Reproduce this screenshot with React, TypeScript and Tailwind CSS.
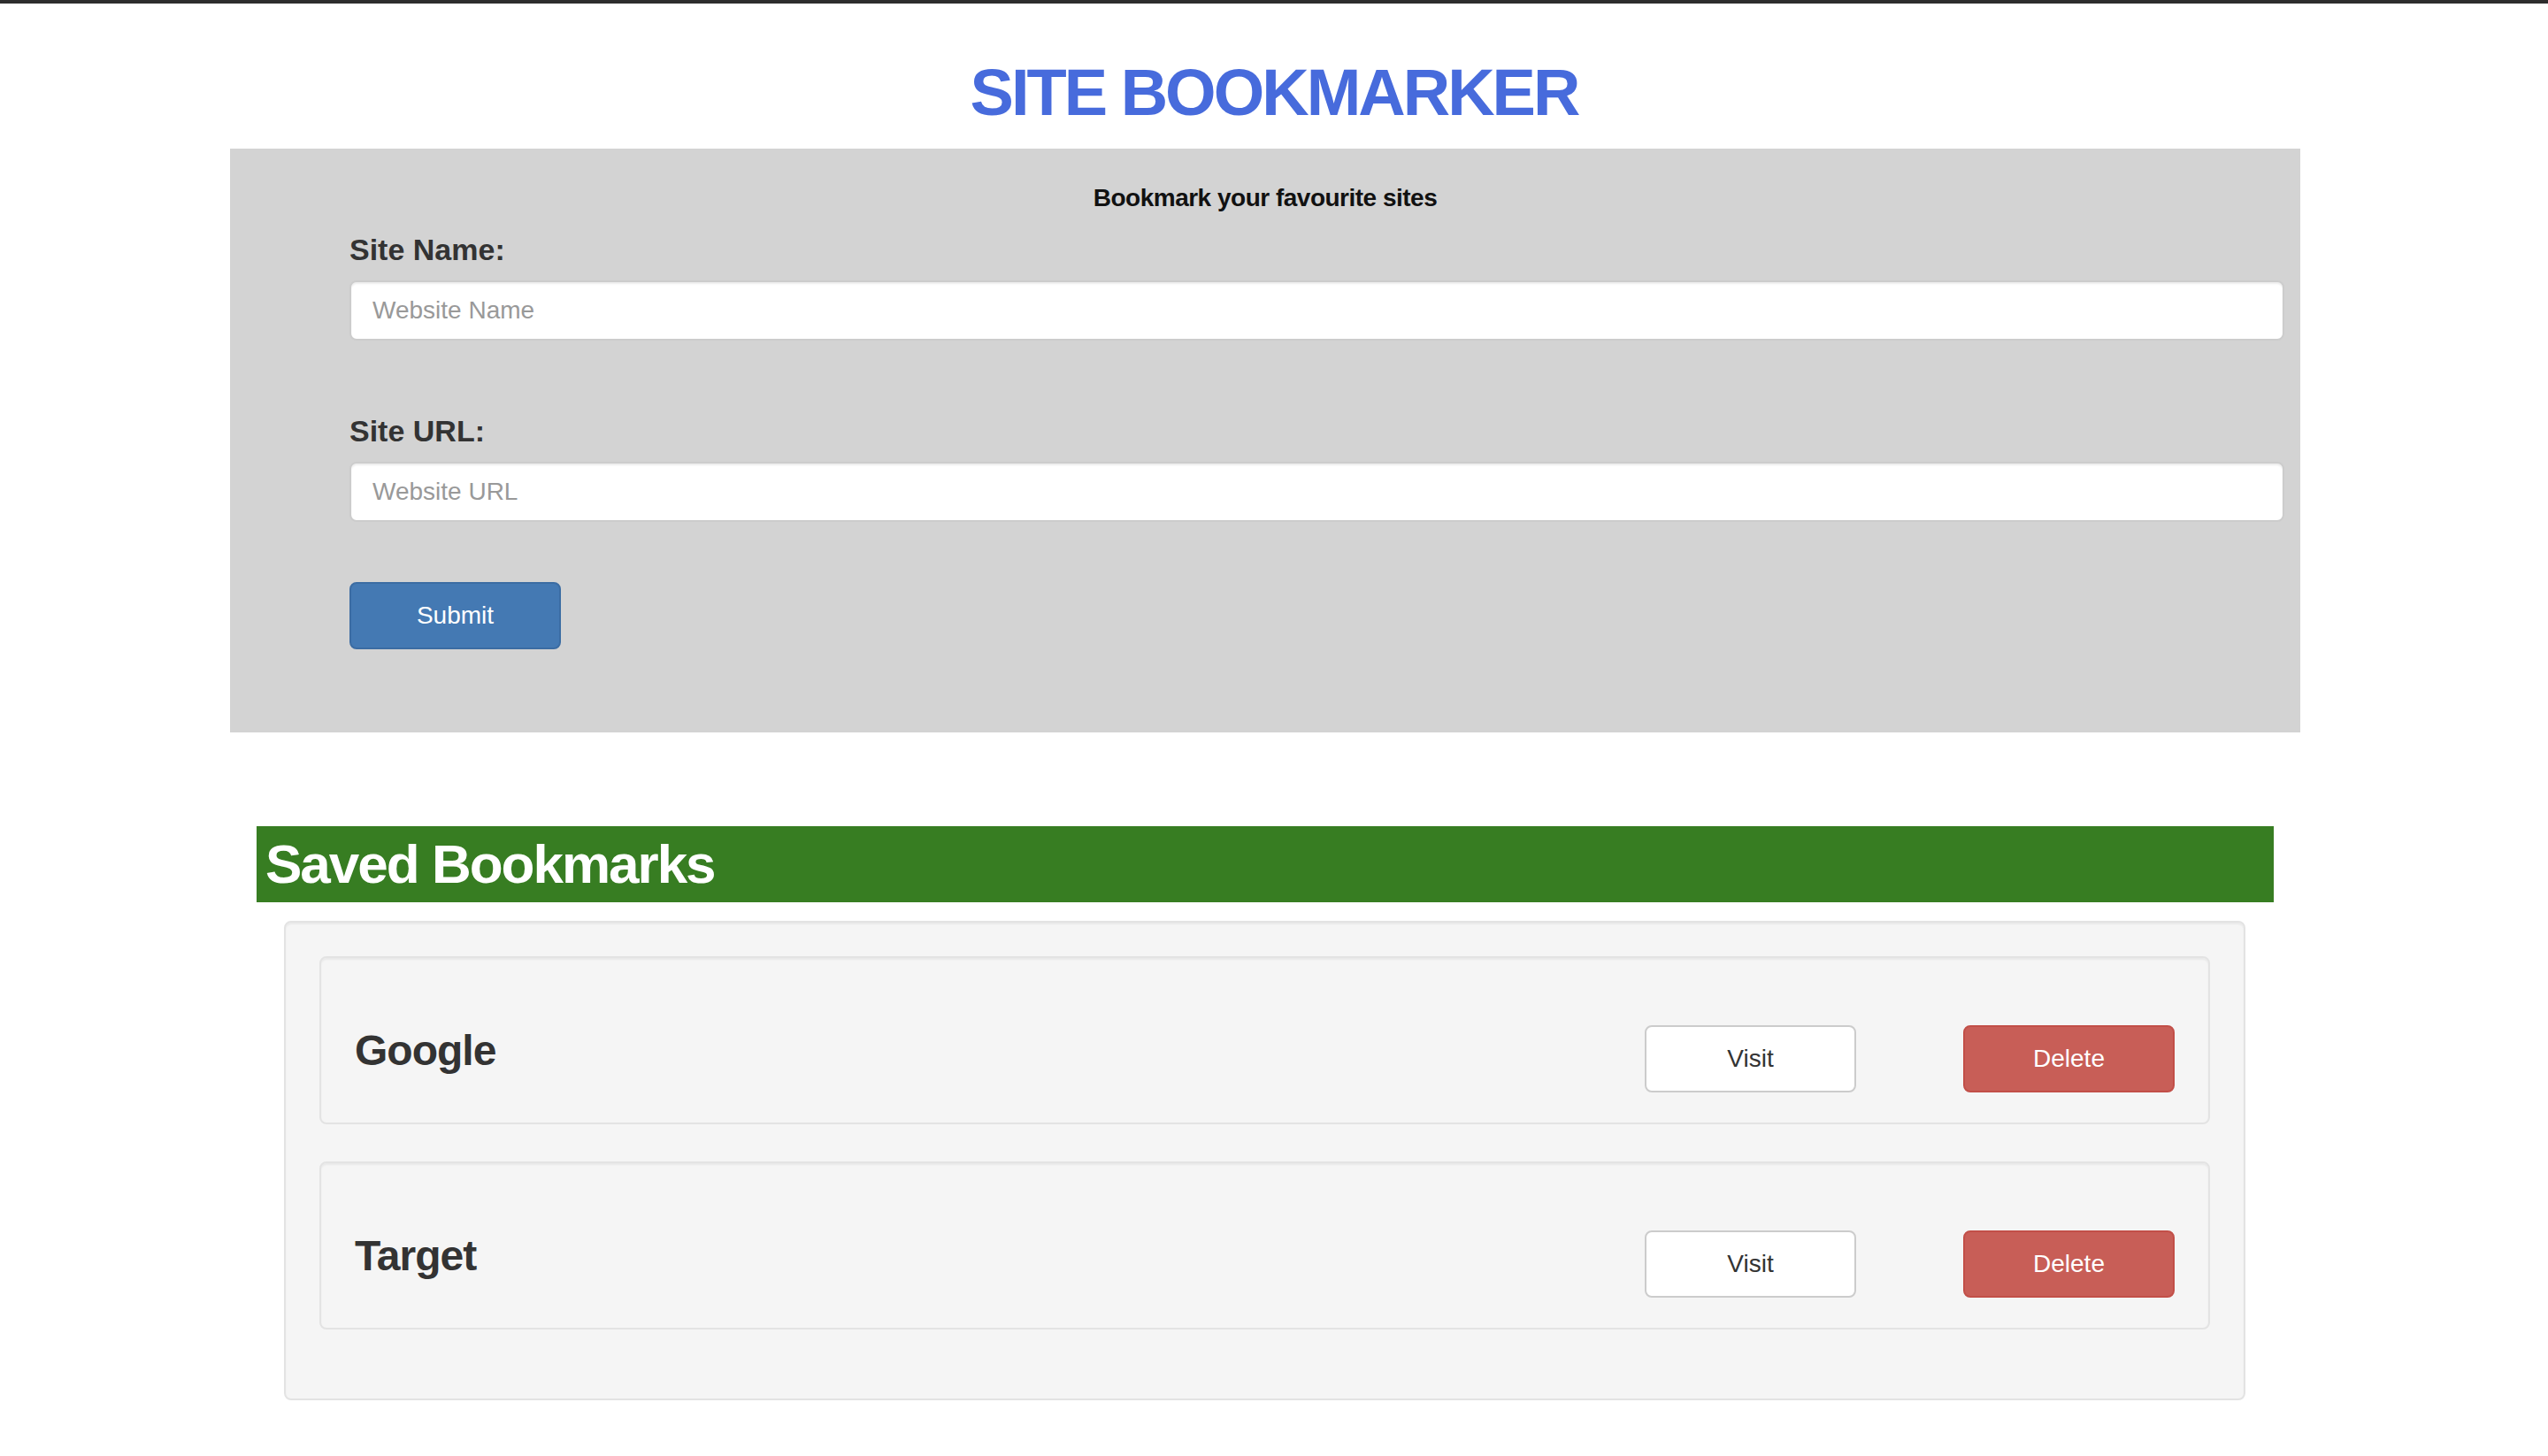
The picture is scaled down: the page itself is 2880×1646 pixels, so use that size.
import React from 'react';

interface Bookmark {
  name: string;
  url: string;
}

const bookmarks: Bookmark[] = [
  { name: 'Google', url: 'https://google.com' },
  { name: 'Target', url: 'https://target.com' },
];

const BookmarkRow = ({ bookmark }: { bookmark: Bookmark }) => (
  <div className="flex h-[190px] items-start justify-between rounded-[8px] border-2 border-[#e3e3e3] bg-[#f5f5f5] px-[38px] shadow-[inset_0_2px_2px_rgba(0,0,0,0.05)]">
    <h3 className="mt-[81px] text-[48px] font-bold leading-[48px] tracking-[-1px] text-[#333]">
      {bookmark.name}
    </h3>
    <div className="mt-[76px] flex gap-[121px]">
      <button className="h-[76px] w-[239px] rounded-[8px] border-2 border-[#cccccc] bg-white text-[28px] text-[#333]">
        Visit
      </button>
      <button className="h-[76px] w-[239px] rounded-[8px] border-2 border-[#c24f48] bg-[#c85e57] text-[28px] text-white">
        Delete
      </button>
    </div>
  </div>
);

export default function App() {
  return (
    <div className="min-h-screen bg-white font-['Liberation_Sans',Arial,sans-serif]">
      <div className="h-[4px] bg-[#2d2d2d]" />

      <h1 className="mt-[64px] text-center text-[74px] font-bold leading-[74px] tracking-[-3px] text-[#476bdc]">
        SITE BOOKMARKER
      </h1>

      <div className="ml-[260px] mt-[26px] h-[660px] w-[2340px] bg-[#d3d3d3] pt-[39px]">
        <p className="text-center text-[28px] font-bold leading-[34px] tracking-[-0.5px] text-[#111]">
          Bookmark your favourite sites
        </p>
        <form className="flex flex-col pl-[135px] pr-[18px]" onSubmit={(e) => e.preventDefault()}>
          <label className="mt-[21px] text-[34px] font-bold leading-[40px] text-[#333]">Site Name:</label>
          <input
            type="text"
            placeholder="Website Name"
            className="mt-[15px] h-[68px] w-full rounded-[8px] border-2 border-[#cccccc] bg-white px-[24px] text-[28px] text-[#555] shadow-[inset_0_2px_2px_rgba(0,0,0,0.075)] outline-none placeholder:text-[#999]"
          />
          <label className="mt-[82px] text-[34px] font-bold leading-[40px] text-[#333]">Site URL:</label>
          <input
            type="text"
            placeholder="Website URL"
            className="mt-[15px] h-[68px] w-full rounded-[8px] border-2 border-[#cccccc] bg-white px-[24px] text-[28px] text-[#555] shadow-[inset_0_2px_2px_rgba(0,0,0,0.075)] outline-none placeholder:text-[#999]"
          />
          <div>
            <button
              type="submit"
              className="mt-[68px] h-[76px] w-[239px] rounded-[8px] border-2 border-[#3b6ca3] bg-[#4479b3] text-[28px] text-white"
            >
              Submit
            </button>
          </div>
        </form>
      </div>

      <div className="ml-[290px] mt-[106px] h-[86px] w-[2280px] bg-[#377d22] pl-[10px] pt-[12px]">
        <h2 className="text-[62px] font-bold leading-[62px] tracking-[-2px] text-white">Saved Bookmarks</h2>
      </div>

      <div className="mb-[40px] ml-[321px] mt-[21px] flex w-[2217px] flex-col gap-[42px] rounded-[8px] border-2 border-[#e3e3e3] bg-[#f5f5f5] p-[38px] pb-[78px] shadow-[inset_0_2px_2px_rgba(0,0,0,0.05)]">
        {bookmarks.map((b) => (
          <BookmarkRow key={b.name} bookmark={b} />
        ))}
      </div>
    </div>
  );
}
